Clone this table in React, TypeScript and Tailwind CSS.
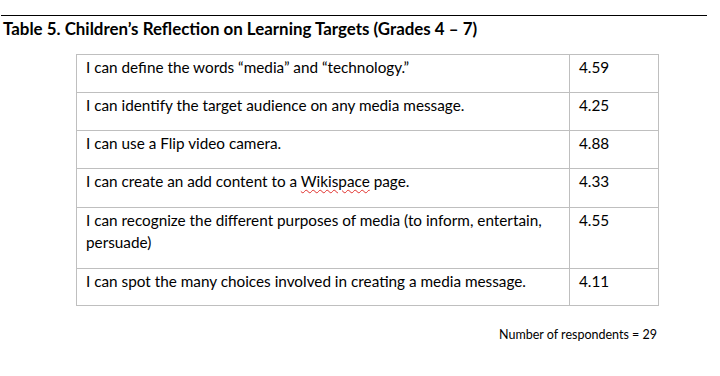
const rows: { text: React.ReactNode; score: string; h: string }[] = [
  { text: "I can define the words \u201cmedia\u201d and \u201ctechnology.\u201d", score: "4.59", h: "h-[38px]" },
  { text: "I can identify the target audience on any media message.", score: "4.25", h: "h-[38px]" },
  { text: "I can use a Flip video camera.", score: "4.88", h: "h-[38px]" },
  {
    text: (
      <>
        I can create an add content to a{" "}
        <span className="underline decoration-wavy decoration-[#e0302c] decoration-1 underline-offset-2">Wikispace</span> page.
      </>
    ),
    score: "4.33",
    h: "h-[39px]",
  },
  {
    text: "I can recognize the different purposes of media (to inform, entertain, persuade)",
    score: "4.55",
    h: "h-[61px]",
  },
  { text: "I can spot the many choices involved in creating a media message.", score: "4.11", h: "h-[37px]" },
];

export default function App() {
  return (
    <div className="h-[376px] w-[720px] bg-white font-['Lato',sans-serif] text-black">
      <div className="pt-[15px]">
        <div className="ml-[1px] h-px w-[706px] bg-black" />
        <h1 className="mt-[4px] pl-[3px] text-[16.9px] font-bold leading-[17px]">
          Table 5. Children&rsquo;s Reflection on Learning Targets (Grades 4 &ndash; 7)
        </h1>
      </div>
      <table className="ml-[76px] mt-[17px] w-[582px] table-fixed border-collapse">
        <colgroup>
          <col className="w-[493px]" />
          <col className="w-[89px]" />
        </colgroup>
        <tbody>
          {rows.map((r) => (
            <tr key={r.score} className={r.h}>
              <td className="border border-[#bfbfbf] px-[9px] pt-[1px] align-top text-[15.3px] leading-[22px]">
                {r.text}
              </td>
              <td className="border border-[#bfbfbf] px-[9px] pt-[1px] align-top text-[15.3px] leading-[22px]">
                {r.score}
              </td>
            </tr>
          ))}
        </tbody>
      </table>
      <p className="mt-[21px] w-[657px] text-right text-[12.5px] leading-[16px]">Number of respondents = 29</p>
    </div>
  );
}
